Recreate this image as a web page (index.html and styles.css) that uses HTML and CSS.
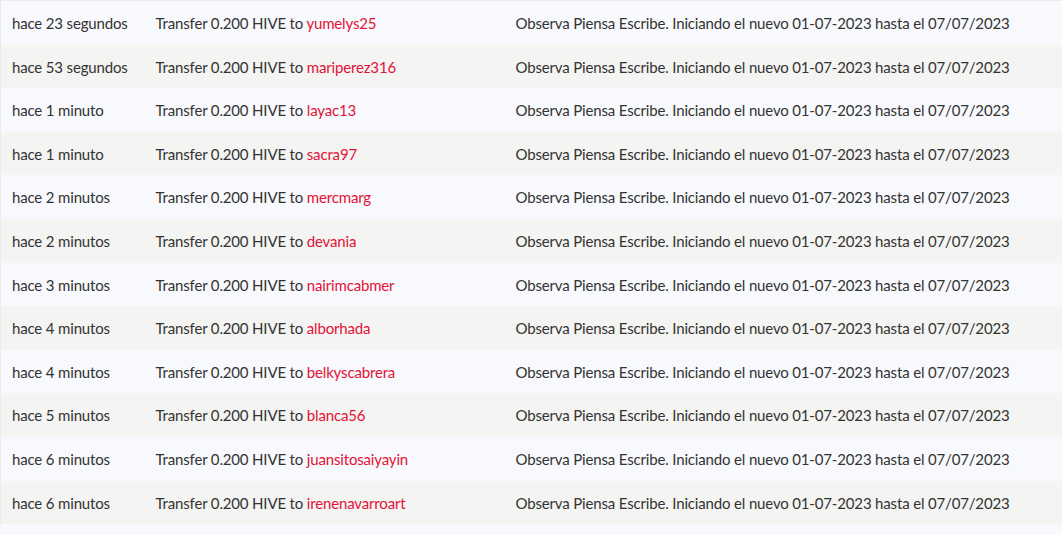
FILE: index.html
```html
<!DOCTYPE html>
<html lang="es">
<head>
    <meta charset="UTF-8">
    <meta name="viewport" content="width=device-width, initial-scale=1.0">
    <title>Transfers</title>
    <link rel="stylesheet" href="styles.css">
</head>
<body>
    <table class="history">
        <colgroup>
            <col class="col-time">
            <col class="col-op">
            <col class="col-memo">
        </colgroup>
        <tbody>
            <tr><td>hace 23 segundos</td><td>Transfer 0.200 HIVE to <a href="#">yumelys25</a></td><td>Observa Piensa Escribe. Iniciando el nuevo 01-07-2023 hasta el 07/07/2023</td></tr>
            <tr><td>hace 53 segundos</td><td>Transfer 0.200 HIVE to <a href="#">mariperez316</a></td><td>Observa Piensa Escribe. Iniciando el nuevo 01-07-2023 hasta el 07/07/2023</td></tr>
            <tr><td>hace 1 minuto</td><td>Transfer 0.200 HIVE to <a href="#">layac13</a></td><td>Observa Piensa Escribe. Iniciando el nuevo 01-07-2023 hasta el 07/07/2023</td></tr>
            <tr><td>hace 1 minuto</td><td>Transfer 0.200 HIVE to <a href="#">sacra97</a></td><td>Observa Piensa Escribe. Iniciando el nuevo 01-07-2023 hasta el 07/07/2023</td></tr>
            <tr><td>hace 2 minutos</td><td>Transfer 0.200 HIVE to <a href="#">mercmarg</a></td><td>Observa Piensa Escribe. Iniciando el nuevo 01-07-2023 hasta el 07/07/2023</td></tr>
            <tr><td>hace 2 minutos</td><td>Transfer 0.200 HIVE to <a href="#">devania</a></td><td>Observa Piensa Escribe. Iniciando el nuevo 01-07-2023 hasta el 07/07/2023</td></tr>
            <tr><td>hace 3 minutos</td><td>Transfer 0.200 HIVE to <a href="#">nairimcabmer</a></td><td>Observa Piensa Escribe. Iniciando el nuevo 01-07-2023 hasta el 07/07/2023</td></tr>
            <tr><td>hace 4 minutos</td><td>Transfer 0.200 HIVE to <a href="#">alborhada</a></td><td>Observa Piensa Escribe. Iniciando el nuevo 01-07-2023 hasta el 07/07/2023</td></tr>
            <tr><td>hace 4 minutos</td><td>Transfer 0.200 HIVE to <a href="#">belkyscabrera</a></td><td>Observa Piensa Escribe. Iniciando el nuevo 01-07-2023 hasta el 07/07/2023</td></tr>
            <tr><td>hace 5 minutos</td><td>Transfer 0.200 HIVE to <a href="#">blanca56</a></td><td>Observa Piensa Escribe. Iniciando el nuevo 01-07-2023 hasta el 07/07/2023</td></tr>
            <tr><td>hace 6 minutos</td><td>Transfer 0.200 HIVE to <a href="#">juansitosaiyayin</a></td><td>Observa Piensa Escribe. Iniciando el nuevo 01-07-2023 hasta el 07/07/2023</td></tr>
            <tr><td>hace 6 minutos</td><td>Transfer 0.200 HIVE to <a href="#">irenenavarroart</a></td><td>Observa Piensa Escribe. Iniciando el nuevo 01-07-2023 hasta el 07/07/2023</td></tr>
        </tbody>
    </table>
</body>
</html>
```

FILE: styles.css
```css
body {
    margin: 0;
    background-color: #f8f9fc;
    font-family: Lato, "Open Sans", sans-serif;
    font-size: 15px;
    letter-spacing: -0.16px;
    color: #333;
    overflow: hidden;
}

.history {
    width: 100%;
    border-collapse: collapse;
    table-layout: fixed;
    border-top: 1px solid #ebebeb;
    border-left: 1px solid #ebebeb;
}

.col-time {
    width: 144px;
}

.col-op {
    width: 360px;
}

.history td {
    padding: 11px 11px 9px;
    line-height: 23.6px;
    white-space: nowrap;
    overflow: hidden;
}

.history tr:nth-child(odd) {
    background-color: #f8f9fc;
}

.history tr:nth-child(even) {
    background-color: #f4f4f2;
}

.history a {
    color: #e31337;
    text-decoration: none;
}
```
